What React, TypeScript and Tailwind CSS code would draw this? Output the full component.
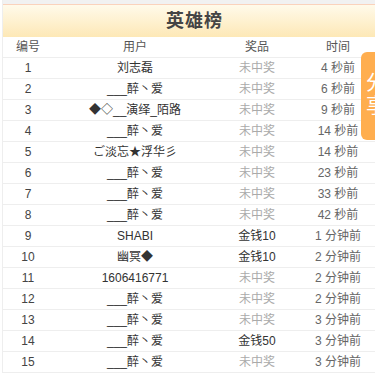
import React from "react";

const rows = [
  { id: 1, user: "刘志磊", prize: "未中奖", time: "4 秒前" },
  { id: 2, user: "___醉丶爱", prize: "未中奖", time: "6 秒前" },
  { id: 3, user: "◆◇__演绎_陌路", prize: "未中奖", time: "9 秒前" },
  { id: 4, user: "___醉丶爱", prize: "未中奖", time: "14 秒前" },
  { id: 5, user: "ご淡忘★浮华彡", prize: "未中奖", time: "14 秒前" },
  { id: 6, user: "___醉丶爱", prize: "未中奖", time: "23 秒前" },
  { id: 7, user: "___醉丶爱", prize: "未中奖", time: "33 秒前" },
  { id: 8, user: "___醉丶爱", prize: "未中奖", time: "42 秒前" },
  { id: 9, user: "SHABI", prize: "金钱10", time: "1 分钟前" },
  { id: 10, user: "幽冥◆", prize: "金钱10", time: "2 分钟前" },
  { id: 11, user: "1606416771", prize: "未中奖", time: "2 分钟前" },
  { id: 12, user: "___醉丶爱", prize: "未中奖", time: "2 分钟前" },
  { id: 13, user: "___醉丶爱", prize: "未中奖", time: "3 分钟前" },
  { id: 14, user: "___醉丶爱", prize: "金钱50", time: "3 分钟前" },
  { id: 15, user: "___醉丶爱", prize: "未中奖", time: "3 分钟前" },
];

export default function App() {
  return (
    <div
      className="relative w-[375px] h-[375px] overflow-hidden bg-white text-[12px] text-[#333]"
      style={{ fontFamily: '"Liberation Sans", "Noto Sans CJK SC", sans-serif' }}
    >
      <div className="ml-[2px] w-[384px] border-l border-[#eee]">
        {/* Title */}
        <div className="h-[4px] bg-[#f1f1f1]" />
        <div className="h-[33px] border-t border-[#fad2bc] bg-linear-to-b from-[#fffaea] to-[#fde8b6] flex items-center justify-center">
          <span className="text-[18px] font-bold text-[#444] tracking-[1px]">英雄榜</span>
        </div>

        {/* Column headers */}
        <div className="grid grid-cols-[50px_164px_80px_82px] h-[21px] items-center border-b border-[#eee] text-[#555]">
          <div className="text-center">编号</div>
          <div className="text-center">用户</div>
          <div className="text-center">奖品</div>
          <div className="text-center">时间</div>
        </div>

        {rows.map((r) => (
          <div
            key={r.id}
            className="grid grid-cols-[50px_164px_80px_82px] h-[21px] items-center border-b border-[#eee]"
          >
            <div className="text-center text-[#444]">{r.id}</div>
            <div className="text-center whitespace-nowrap">{r.user}</div>
            <div className={r.prize === "未中奖" ? "text-center text-[#aaa]" : "text-center text-[#333]"}>
              {r.prize}
            </div>
            <div className="text-center text-[#666] whitespace-nowrap">{r.time}</div>
          </div>
        ))}
      </div>

      {/* Share tab */}
      <div className="absolute right-0 top-[52px] w-[14px] h-[88px] rounded-l-[6px] bg-[#ffae4f] overflow-hidden">
        <div className="flex flex-col pt-[20px] pl-[5px] text-[20px] leading-[23px] text-white whitespace-nowrap">
          <span>分</span>
          <span>享</span>
        </div>
      </div>
    </div>
  );
}
